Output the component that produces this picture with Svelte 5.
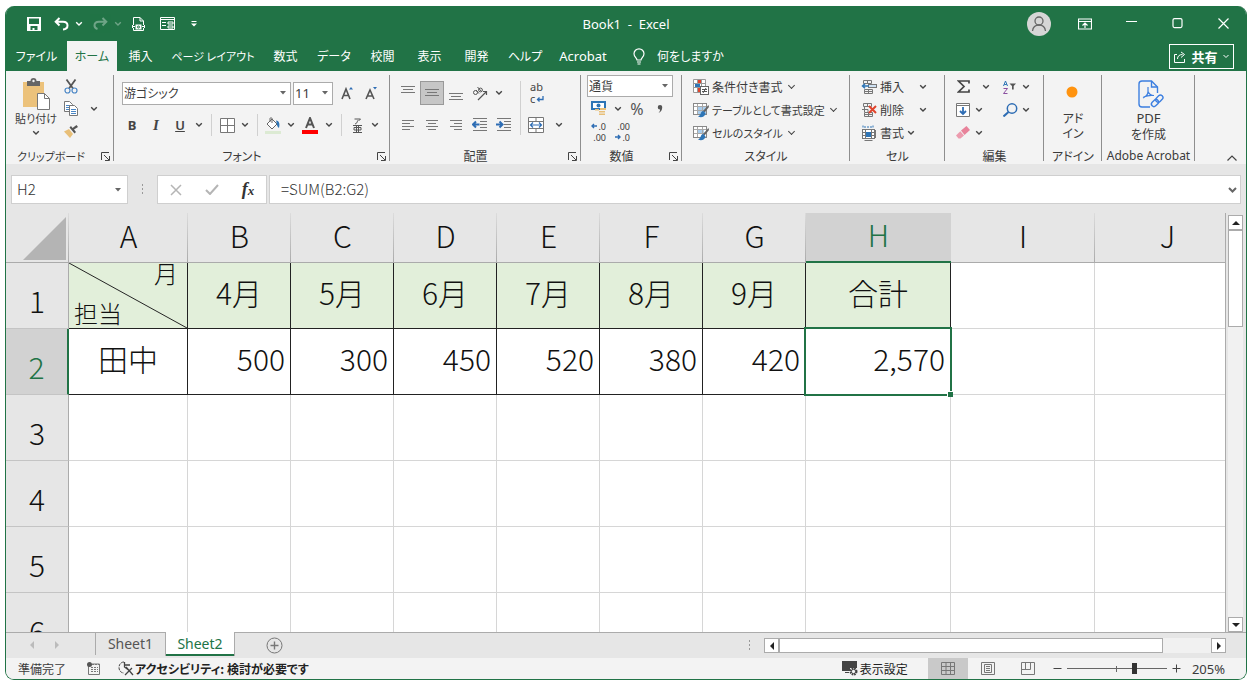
<script>
  const tabs = [
    { label: 'ファイル', size: 'file' },
    { label: 'ホーム', size: 'mid', active: true },
    { label: '挿入' },
    { label: 'ページ レイアウト', size: 'wide' },
    { label: '数式' },
    { label: 'データ', size: 'mid' },
    { label: '校閲' },
    { label: '表示' },
    { label: '開発' },
    { label: 'ヘルプ', size: 'mid' },
    { label: 'Acrobat', size: 'latin' }
  ];

  const months = ['4月', '5月', '6月', '7月', '8月', '9月'];
  const values = ['500', '300', '450', '520', '380', '420'];
  const columns = ['A', 'B', 'C', 'D', 'E', 'F', 'G', 'H', 'I', 'J'];
  const emptyRows = [3, 4, 5, 6];
  let formula = $state('=SUM(B2:G2)');
  let cellName = $state('H2');
</script>

{#snippet caret(kind = '')}
  <button class="caret {kind}" aria-label="その他">
    <svg width="8" height="6" viewBox="0 0 8 6"><path d="M1.2 1.3 4 4l2.8-2.7" fill="none" stroke="currentColor" stroke-width="1.4" /></svg>
  </button>
{/snippet}

{#snippet tri()}
  <svg class="tri" width="6" height="4" viewBox="0 0 6 4"><path d="M0 0h6L3 3.6z" fill="#666" /></svg>
{/snippet}

{#snippet groupLabel(text, launcher)}
  <div class="group-label">
    <span>{text}</span>
    {#if launcher}
      <button class="launcher" aria-label="{text}の設定">
        <svg width="9" height="9" viewBox="0 0 9 9"><path d="M.5 8V.5H8M3 3l5 5M8.500 4v4.500H4" fill="none" stroke="#444" /></svg>
      </button>
    {/if}
  </div>
{/snippet}

{#snippet lines(list)}
  <svg width="16" height="16" viewBox="0 0 16 16" stroke="#777">
    {#each list as [x1, x2, y]}<path d="M{x1} {y}.5H{x2}" />{/each}
  </svg>
{/snippet}

{#snippet indent(dir)}
  <svg width="16" height="14" viewBox="0 0 16 14" fill="none">
    <path d="M1 .5h14M8 3.500h7M8 6.500h7M8 9.500h7M1 12.500h14" stroke="#777" />
    {#if dir === 'left'}
      <path d="M7.500 6.500h-6M4 3.500l-3 3 3 3" stroke="#2e6db4" stroke-width="2" />
    {:else}
      <path d="M0 6.500h6M3.500 3.500l3 3-3 3" stroke="#2e6db4" stroke-width="2" />
    {/if}
  </svg>
{/snippet}

{#snippet brushTable(blue)}
  <svg width="16" height="16" viewBox="0 0 16 16" fill="none">
    <rect x=".5" y="1.500" width="13" height="11" fill="#fff" stroke="#888" />
    {#if blue}<rect x="4" y="5" width="7" height="4" fill="#a9cdec" />{:else}<rect x="5" y="5" width="8" height="7" fill="#a9cdec" />{/if}
    <path d="M1 4.500h12M1 8.500h12M4.500 2v10M9.500 2v10" stroke="#a8a8a8" />
    <path d="M15.500 3 10 9l1.500 1.500L16 5z" fill="#666" />
    <path d="M10.500 9c-2 0-2.500 1.500-3 3-.3 1-1.500 2-2.500 2.500 3 1.500 7 .5 7.500-3z" fill="#2e75b6" />
  </svg>
{/snippet}

{#snippet cellsIcon(kind)}
  <svg width="16" height="16" viewBox="0 0 16 16" fill="none">
    {#if kind === 'format'}
      <path d="M2 .5v3M12 .5v3M3 2h8" stroke="#2e75b6" stroke-dasharray="2 1" />
      <rect x="1.500" y="4.500" width="12" height="9" fill="#fff" stroke="#777" />
      <path d="M1 7.500h13M1 10.500h13M4.500 4v10M10.500 4v10M3.500 15.500h8M14.500 5v8" stroke="#777" />
      <rect x="5" y="7" width="5" height="5" fill="#2e75b6" />
    {:else}
      <path d="M2.500 1.500h8v3h-8zM6.500 1.500v3M3.500 10.500h8v4h-8zM3.500 12.500h8M7.500 10.500v4" stroke="#777" />
      {#if kind === 'insert'}
        <rect x="7.500" y="5.500" width="8" height="3" fill="#cfe2f3" stroke="#777" />
        <path d="M8 7H2M4 4.800 1.500 7 4 9.200" stroke="#2e75b6" stroke-width="1.500" />
      {:else}
        <path d="M1 7.500h6v3M3.500 5v5" stroke="#777" />
        <path d="m8 4 7 7m0-7-7 7" stroke="#e0442c" stroke-width="2" />
      {/if}
    {/if}
  </svg>
{/snippet}

<div class="window">
  <header class="title">
    <div class="quick">
      <button class="q" aria-label="上書き保存">
        <svg width="14" height="14" viewBox="0 0 14 14"><path fill="#fff" fill-rule="evenodd" d="M0 0h14v14H0zM2 1.500v5.500h10V1.500zM3.500 9v4h2v-2h2v2h3V9z" /></svg>
      </button>
      <button class="q" aria-label="元に戻す">
        <svg width="15" height="14" viewBox="0 0 15 14" fill="none" stroke="#fff" stroke-width="2"><path d="M5.500 1 1.700 4.800l3.800 3.700M2 4.800h7c3.500 0 4.500 2 4.500 3.700 0 2.500-2 3.800-4.500 4" /></svg>
      </button>
      {@render caret('light')}
      <button class="q dim" aria-label="やり直し">
        <svg width="15" height="14" viewBox="0 0 15 14" fill="none" stroke="#fff" stroke-width="2"><path d="m9.500 1 3.800 3.800-3.800 3.700M13 4.800H6c-3.500 0-4.500 2-4.500 3.700 0 2 1.500 3 3 3.500" /></svg>
      </button>
      {@render caret('light dim')}
      <button class="q" aria-label="PDF">
        <svg width="13" height="16" viewBox="0 0 13 16" fill="none" stroke="#fff"><path d="M1.500 9V1.500H8l3.500 3.500v4M8 1.500V5h3.500M1.500 12v2.500h10V12" /><path d="M0 10.500h3M10 10.500h3M.500 9v3M12.500 9v3" /><rect x="4" y="9" width="5" height="4" fill="#fff" /><circle cx="6.500" cy="11" r="1" stroke="#217346" /></svg>
      </button>
      <button class="q form" aria-label="フォーム">
        <svg width="15" height="13" viewBox="0 0 15 13" fill="none" stroke="#fff"><path d="M.500.500h14v12H.500zM.500 2.500h14M2 5.500h4M2 8.500h4M8 5h5v2H8zM8 9h5v2H8z" /></svg>
      </button>
      <button class="q" aria-label="ツールバーのカスタマイズ">
        <svg width="6" height="6" viewBox="0 0 6 6"><path d="M.500 0h5v1h-5zM0 2.500h6L3 5.500z" fill="#fff" /></svg>
      </button>
    </div>
    <h1>Book1&nbsp; -&nbsp; Excel</h1>
    <div class="controls">
      <button class="w" aria-label="アカウント">
        <svg width="24" height="24" viewBox="0 0 24 24" fill="none" stroke="#666" stroke-width="1.300"><circle cx="12" cy="12" r="12" fill="#d6d6d6" stroke="none" /><circle cx="12" cy="9" r="4" /><path d="M5.500 19c.5-4 3-6 6.500-6s6 2 6.500 6" /></svg>
      </button>
      <button class="w" aria-label="リボンの表示オプション">
        <svg width="14" height="12" viewBox="0 0 14 12" fill="none" stroke="#fff"><path d="M.500 1h13v10H.500zM0 3.500h14M7 10V5.500M4.500 7.500 7 5l2.500 2.500" stroke-width="1.200" /></svg>
      </button>
      <button class="w" aria-label="最小化"><svg width="11" height="11" viewBox="0 0 11 11"><path d="M0 3.500h11" stroke="#fff" /></svg></button>
      <button class="w" aria-label="最大化"><svg width="11" height="11" viewBox="0 0 11 11"><rect x="1" y="0.600" width="9" height="9" rx="1.500" fill="none" stroke="#fff" stroke-width="1.200" /></svg></button>
      <button class="w" aria-label="閉じる"><svg width="11" height="11" viewBox="0 0 11 11"><path d="m.500.500 10 10m0-10-10 10" stroke="#fff" stroke-width="1.200" /></svg></button>
    </div>
  </header>

  <nav class="tabs">
    {#each tabs as tab}
      <button class="tab {tab.size ?? ''}" class:active={tab.active}>{tab.label}</button>
    {/each}
    <button class="tell">
      <svg width="12" height="17" viewBox="0 0 12 17" fill="none" stroke="#fff" stroke-width="1.200"><path d="M4 12c0-2-3-3-3-6.200a5 5 0 0 1 10 0C11 9 8 10 8 12zM4 14h4M4.500 16h3" /></svg>
      何をしますか
    </button>
    <button class="share">
      <svg width="12" height="12" viewBox="0 0 12 12" fill="none" stroke="#fff"><path d="M3 3.500H.500v8h10V8M3.500 8c0-3 2-4.500 5-4.500M7 1l3.500 2.500L7 6.500" /></svg>
      <b>共有</b>
      <svg width="6" height="5" viewBox="0 0 6 5"><path d="m.500 1 2.500 2.500L5.500 1" fill="none" stroke="#fff" /></svg>
    </button>
  </nav>

  <section class="ribbon">
    <div class="group clipboard">
      <div class="body">
        <div class="paste">
          <button class="big small">
            <svg width="28" height="32" viewBox="0 0 28 32"><rect x="1" y="4" width="21" height="25" fill="#ecc27b" /><path d="M5 3h3.500a3 3 0 0 1 6 0H18v5H5z" fill="#666" /><circle cx="11.500" cy="3" r="1.200" fill="#f3f3f3" /><path d="M15.500 15.500h7l5 5v11h-12z" fill="#fff" stroke="#777" /><path d="M22.500 15.500v5h5" fill="none" stroke="#777" /></svg>
            貼り付け
          </button>
          {@render caret()}
        </div>
        <div class="stack">
          <button class="b" aria-label="切り取り">
            <svg width="14" height="15" viewBox="0 0 14 15" fill="none"><path d="m2.500.500 6.500 9M11.500.500 5 9.500" stroke="#555" stroke-width="1.800" /><circle cx="3.500" cy="11.500" r="2.500" stroke="#4a86c5" stroke-width="1.200" /><circle cx="10.500" cy="11.500" r="2.500" stroke="#4a86c5" stroke-width="1.200" /></svg>
          </button>
          <div class="row">
            <button class="b" aria-label="コピー">
              <svg width="14" height="15" viewBox="0 0 14 15" fill="#fff"><path d="M.500.500h5l3 3v7h-8z" stroke="#777" /><path d="M2 4.500h5M2 6.500h5M2 8.500h3" stroke="#4a86c5" /><path d="M5.500 4.500h5l3 3v7h-8z" stroke="#777" /><path d="M7 8.500h5M7 10.500h5M7 12.500h5" stroke="#4a86c5" /></svg>
            </button>
            {@render caret('wide')}
          </div>
          <button class="b" aria-label="書式のコピー">
            <svg width="14" height="13" viewBox="0 0 14 13"><path d="M0 6.500 5 4l4 5-3 4z" fill="#e8bf78" /><path d="m5.500 2.500 5 6 1.500-1.500-2-2.500L14 2l-1.500-2L8.500 3 7 1z" fill="#555" /></svg>
          </button>
        </div>
      </div>
      {@render groupLabel('クリップボード', true)}
    </div>

    <div class="group font">
      <div class="body two">
        <div class="row fields">
          <label class="combo fontname"><select aria-label="フォント"><option>游ゴシック</option></select>{@render tri()}</label>
          <label class="combo fontsize"><select aria-label="フォント サイズ"><option>11</option></select>{@render tri()}</label>
          <button class="b grow" aria-label="拡大"><svg width="14" height="16" viewBox="0 0 14 16"><path d="m1 14 4-10 4 10M2.500 10.500h5" fill="none" stroke="#555" stroke-width="1.600" /><path d="M8 4.500 10 2l2 2.500z" fill="#2e6db4" /></svg></button>
          <button class="b" aria-label="縮小"><svg width="14" height="16" viewBox="0 0 14 16"><path d="m1 14 4-9 4 9M2.500 11h5" fill="none" stroke="#555" stroke-width="1.600" /><path d="M8 2h4l-2 2.500z" fill="#2e6db4" /></svg></button>
        </div>
        <div class="row">
          <button class="b letter"><b>B</b></button>
          <button class="b letter serif"><i>I</i></button>
          <button class="b letter"><u>U</u></button>
          {@render caret()}
          <span class="sep"></span>
          <button class="b s" aria-label="罫線"><svg width="15" height="15" viewBox="0 0 15 15"><path d="M.500.500h14v14H.500zM7.500 0v15M0 7.500h15" fill="#fff" stroke="#777" /></svg></button>
          {@render caret()}
          <span class="sep"></span>
          <button class="b s" aria-label="塗りつぶし"><svg width="16" height="17" viewBox="0 0 16 17" fill="none"><path d="m2 7 5-5 5 5-5 5z" fill="#fff" stroke="#666" /><path d="M5 5V1.500c0-1 2-1 2 0V6" stroke="#666" /><path d="M11 3.500c3.500.5 4 3.500 3 7.500-2.500-1.500-2-4.500-3-7.500z" fill="#2e75b6" /><path d="M0 14h16v3H0z" fill="#dcead3" /></svg></button>
          {@render caret()}
          <button class="b" aria-label="文字の色"><svg width="16" height="17" viewBox="0 0 16 17"><path d="m4 11 4-10 4 10M5.500 7.500h5" fill="none" stroke="#555" stroke-width="2" /><path d="M0 13h16v4H0z" fill="#f00" /></svg></button>
          {@render caret()}
          <span class="sep"></span>
          <button class="b s" aria-label="ふりがな"><svg width="9" height="15" viewBox="0 0 9 15" fill="none" stroke="#555"><path d="M1.500 1h6L5.500 3M4.500 2.500c0 2-1 3-2.500 3.500M0 7.500h9M3.500 7.500v7M5.500 7.500v7M0 14.500h9M1 9.500h7v2.500H1z" /></svg></button>
          {@render caret()}
        </div>
      </div>
      {@render groupLabel('フォント', true)}
    </div>

    <div class="group align">
      <div class="body two split">
        <div class="block">
          <div class="row">
            <button class="b" aria-label="上揃え">{@render lines([[1, 15, 1], [3, 13, 4], [1, 15, 7]])}</button>
            <button class="b on" aria-label="上下中央揃え">{@render lines([[1, 15, 4], [3, 13, 7], [1, 15, 10]])}</button>
            <button class="b" aria-label="下揃え">{@render lines([[1, 15, 8], [3, 13, 11], [1, 15, 14]])}</button>
            <button class="b" aria-label="方向"><svg width="16" height="15" viewBox="0 0 16 15" fill="none" stroke="#555"><circle cx="3.500" cy="6.500" r="2" /><path d="m4 4 3 3.500M5.500 1l4 4.500" /><circle cx="8.500" cy="4" r="1.900" /><path d="m6 14 8.500-8.500M11 5.500h3.500V9" stroke-width="1.200" /></svg></button>
            {@render caret()}
          </div>
          <div class="row">
            <button class="b" aria-label="左揃え">{@render lines([[2, 14, 3], [2, 10, 6], [2, 14, 9], [2, 10, 12]])}</button>
            <button class="b" aria-label="中央揃え">{@render lines([[2, 14, 3], [4, 12, 6], [2, 14, 9], [4, 12, 12]])}</button>
            <button class="b" aria-label="右揃え">{@render lines([[2, 14, 3], [6, 14, 6], [2, 14, 9], [6, 14, 12]])}</button>
            <button class="b" aria-label="インデントを減らす">{@render indent('left')}</button>
            <button class="b" aria-label="インデントを増やす">{@render indent('right')}</button>
          </div>
        </div>
        <span class="sep tall"></span>
        <div class="block">
          <button class="b wrap" aria-label="折り返して全体を表示する">
            <span class="ab">ab</span>
            <span class="cr">c<svg width="8" height="7" viewBox="0 0 8 7" fill="none"><path d="M7 0v3.500H1.500M3.500 1.500l-2 2 2 2" stroke="#2e6db4" stroke-width="1.300" /></svg></span>
          </button>
          <div class="row">
            <button class="b" aria-label="セルを結合して中央揃え"><svg width="16" height="16" viewBox="0 0 16 16" fill="#fff"><path d="M.500.500h15v15H.500zM0 4.500h16M0 11.500h16M8 0v4M8 12v4" stroke="#777" /><path d="M2.500 8h11M5 5.500 2.500 8 5 10.500M11 5.500 13.500 8 11 10.500" fill="none" stroke="#2e6db4" stroke-width="1.200" /></svg></button>
            {@render caret('wide')}
          </div>
        </div>
      </div>
      {@render groupLabel('配置', true)}
    </div>

    <div class="group number">
      <div class="body">
        <label class="combo format"><select aria-label="表示形式"><option>通貨</option></select>{@render tri()}</label>
        <div class="row">
          <button class="b" aria-label="通貨表示形式"><svg width="16" height="15" viewBox="0 0 16 15"><rect x="1" y="1" width="13" height="7" fill="#fff" stroke="#2e75b6" stroke-width="2" /><circle cx="7.500" cy="4.500" r="2" fill="#2e75b6" /><path d="M9 7h6v2H9zM8 10h6v1.500H8zM8 12.500h6V14H8zM4 8h4v1.500H4z" fill="#e8bf78" /></svg></button>
          {@render caret()}
          <button class="b percent">%</button>
          <button class="b s comma" aria-label="桁区切り"><svg width="6" height="8" viewBox="0 0 6 8"><path d="M3 0a2.200 2.200 0 0 1 2.200 2.500C5.200 5 4 7 1.500 8c1-1.200 1.700-2.300 1.500-3.500A2.200 2.200 0 0 1 3 0z" fill="#555" /></svg></button>
        </div>
        <div class="row">
          <button class="b dec" aria-label="小数点以下の表示桁数を増やす">
            <span><svg width="6" height="6" viewBox="0 0 6 6" fill="none"><path d="M6 3H1M3 1 1 3l2 2" stroke="#2e6db4" stroke-width="1.400" /></svg>.0</span><span>.00</span>
          </button>
          <button class="b dec" aria-label="小数点以下の表示桁数を減らす">
            <span>.00</span><span><svg width="6" height="6" viewBox="0 0 6 6" fill="none"><path d="M0 3h5M3 1l2 2-2 2" stroke="#2e6db4" stroke-width="1.400" /></svg>.0</span>
          </button>
        </div>
      </div>
      {@render groupLabel('数値', true)}
    </div>

    <div class="group style">
      <div class="body">
        <button class="item">
          <svg width="16" height="16" viewBox="0 0 16 16"><path d="M.500.500h12v13H.500zM0 4.500h12M0 8.500h12M4.500 0v14M8.500 0v14" fill="#fff" stroke="#999" /><path d="M5 1h3v3H5zM5 9h2v4H5z" fill="#e0442c" /><path d="M2 5h5v3H2z" fill="#2e75b6" /><rect x="7.500" y="7.500" width="8" height="8" fill="#fff" stroke="#666" /><path d="M9 10.500h5M9 12.500h5M13 9l-3 5" stroke="#555" /></svg>
          条件付き書式<i class="chev"></i>
        </button>
        <button class="item small">{@render brushTable(false)}テーブルとして書式設定<i class="chev"></i></button>
        <button class="item small">{@render brushTable(true)}セルのスタイル<i class="chev"></i></button>
      </div>
      {@render groupLabel('スタイル')}
    </div>

    <div class="group cells">
      <div class="body">
        <div class="row"><button class="item">{@render cellsIcon('insert')}挿入</button>{@render caret('far')}</div>
        <div class="row"><button class="item">{@render cellsIcon('delete')}削除</button>{@render caret('far')}</div>
        <div class="row"><button class="item">{@render cellsIcon('format')}書式</button>{@render caret()}</div>
      </div>
      {@render groupLabel('セル')}
    </div>

    <div class="group edit">
      <div class="body">
        <div class="pair">
          <div class="row">
            <button class="b" aria-label="合計"><svg width="13" height="13" viewBox="0 0 13 13"><path d="M12 3.500V1H1.500l5.500 5.500L1.500 12H12V9.500" fill="none" stroke="#444" stroke-width="1.700" /></svg></button>
            {@render caret('wide')}
          </div>
          <div class="row">
            <button class="b" aria-label="並べ替えとフィルター"><svg width="14" height="14" viewBox="0 0 14 14" fill="none"><path d="m.500 6 2-5 2 5M1.200 4.500h2.600" stroke="#2e75b6" /><path d="M.500 8.500h4l-4 5h4" stroke="#8a4fa0" /><path d="M6.500 3.500H13L10.700 6v3.500H9V6z" fill="#555" /></svg></button>
            {@render caret()}
          </div>
        </div>
        <div class="pair">
          <div class="row">
            <button class="b" aria-label="フィル"><svg width="14" height="14" viewBox="0 0 14 14" fill="none"><path d="M.500.500h13v13H.500zM0 2.500h14" fill="#fff" stroke="#777" /><path d="M7 4v7M4 8l3 3 3-3" stroke="#2e6db4" stroke-width="1.800" /></svg></button>
            {@render caret()}
          </div>
          <div class="row">
            <button class="b" aria-label="検索と選択"><svg width="15" height="14" viewBox="0 0 15 14" fill="none" stroke="#2e6db4"><circle cx="9" cy="5.500" r="4.700" stroke-width="1.500" /><path d="m5.500 9-5 4.500" stroke-width="2" /></svg></button>
            {@render caret()}
          </div>
        </div>
        <div class="row">
          <button class="b" aria-label="クリア"><svg width="14" height="13" viewBox="0 0 14 13"><path d="M5 4.500 10.500 0 14 4 8.500 9z" fill="#e8829a" /><path d="M4.300 5.200 8 9.500 4.500 12.500H2.500L0 9.500z" fill="#ec9bae" /></svg></button>
          {@render caret()}
        </div>
      </div>
      {@render groupLabel('編集')}
    </div>

    <div class="group addin">
      <div class="body">
        <button class="big">
          <svg width="32" height="32" viewBox="0 0 32 32"><circle cx="15" cy="14" r="5.500" fill="#ff930f" /></svg>
          <span>アド<br />イン</span>
        </button>
      </div>
      {@render groupLabel('アドイン')}
    </div>

    <div class="group acrobat">
      <div class="body">
        <button class="big">
          <svg width="32" height="32" viewBox="0 0 32 32" fill="none" stroke="#3c7fe0" stroke-width="1.400"><path d="M18 29H10a3 3 0 0 1-3-3V6a3 3 0 0 1 3-3h9.500l6 6v6" /><path d="M19.500 3v6h6" /><path d="M16 9v4.500c0 2-2 5-5 6.500M16 13.500c1 2.500 3 4 6 4-4-.5-8 .5-10.500 1.500" stroke-width="1.200" /><rect x="19" y="22.500" width="8" height="5" rx="2.500" transform="rotate(-45 23 25)" /><rect x="23.500" y="18.500" width="8" height="5" rx="2.500" transform="rotate(-45 27 21)" /></svg>
          <span><span class="latin">PDF</span><br />を作成</span>
        </button>
      </div>
      {@render groupLabel('Adobe Acrobat')}
    </div>
    <button class="collapse" aria-label="リボンを折りたたむ"><svg width="10" height="6" viewBox="0 0 10 6"><path d="m.500 5.500 4.500-4.500 4.500 4.500" fill="none" stroke="#444" stroke-width="1.200" /></svg></button>
  </section>

  <section class="formula">
    <label class="box name"><input aria-label="名前ボックス" bind:value={cellName} />{@render tri()}</label>
    <span class="dots"></span>
    <div class="box fx">
      <button aria-label="キャンセル"><svg width="12" height="12" viewBox="0 0 12 12"><path d="m1 1 10 10m0-10L1 11" stroke="#b5b5b5" stroke-width="1.500" /></svg></button>
      <button aria-label="入力"><svg width="14" height="11" viewBox="0 0 14 11"><path d="m1 6 4 4 8-9" fill="none" stroke="#b5b5b5" stroke-width="2" /></svg></button>
      <button class="fn"><i>f<small>x</small></i></button>
    </div>
    <label class="box entry"><input aria-label="数式バー" bind:value={formula} />
      <svg width="9" height="6" viewBox="0 0 9 6"><path d="m1 1 3.500 3.500L8 1" fill="none" stroke="#666" stroke-width="2" /></svg>
    </label>
  </section>

  <main class="area">
    <div class="grid">
      <table>
        <colgroup>
          <col class="c-head" /><col class="c-a" />
          {#each months as _}<col class="c-month" />{/each}
          <col class="c-sum" /><col class="c-free" /><col />
        </colgroup>
        <thead>
          <tr>
            <th class="corner" aria-label="すべて選択"><svg width="43" height="43" viewBox="0 0 43 43"><path d="M43 0v43H0z" fill="#b4b4b4" /></svg></th>
            {#each columns as col}<th scope="col" class:sel={col === 'H'}>{col}</th>{/each}
          </tr>
        </thead>
        <tbody>
          <tr class="data">
            <th scope="row">1</th>
            <td class="green diagonal">
              <svg class="slash" viewBox="0 0 118 66" preserveAspectRatio="none"><path d="M0 0 118 66" stroke="#222" /></svg>
              <div class="split-text"><span>月</span><span>担当</span></div>
            </td>
            {#each months as m}<td class="green center">{m}</td>{/each}
            <td class="green center">合計</td>
            <td class="plain"></td><td class="plain"></td>
          </tr>
          <tr class="data">
            <th scope="row" class="sel">2</th>
            <td class="center">田中</td>
            {#each values as v}<td>{v}</td>{/each}
            <td class="current">2,570<span class="cursor"></span></td>
            <td class="plain"></td><td class="plain"></td>
          </tr>
          {#each emptyRows as r}
            <tr>
              <th scope="row">{r}</th>
              {#each columns as _}<td class="plain"></td>{/each}
            </tr>
          {/each}
        </tbody>
      </table>
    </div>
    <div class="vscroll">
      <button aria-label="上へ"><svg width="8" height="4" viewBox="0 0 8 4"><path d="M0 4h8L4 0z" fill="#222" /></svg></button>
      <div class="vthumb"></div>
      <button class="end" aria-label="下へ"><svg width="8" height="4" viewBox="0 0 8 4"><path d="M0 0h8L4 4z" fill="#222" /></svg></button>
    </div>
  </main>

  <section class="sheets">
    <button class="arrow" aria-label="前のシート"><svg width="4" height="8" viewBox="0 0 4 8"><path d="M4 0v8L0 4z" fill="#bbb" /></svg></button>
    <button class="arrow" aria-label="次のシート"><svg width="4" height="8" viewBox="0 0 4 8"><path d="M0 0v8l4-4z" fill="#bbb" /></svg></button>
    <button class="sheet first">Sheet1</button>
    <button class="sheet open">Sheet2</button>
    <button class="add" aria-label="新しいシート"><svg width="17" height="17" viewBox="0 0 17 17" fill="none" stroke="#777"><circle cx="8.500" cy="8.500" r="7.500" /><path d="M8.500 4.500v8M4.500 8.500h8" stroke-width="1.400" /></svg></button>
    <span class="dots"></span>
    <div class="hscroll">
      <button aria-label="左へ"><svg width="4" height="8" viewBox="0 0 4 8"><path d="M4 0v8L0 4z" fill="#222" /></svg></button>
      <div class="hthumb"></div>
      <button class="end" aria-label="右へ"><svg width="4" height="8" viewBox="0 0 4 8"><path d="M0 0v8l4-4z" fill="#222" /></svg></button>
    </div>
  </section>

  <footer class="status">
    <span>準備完了</span>
    <svg class="macro" width="13" height="13" viewBox="0 0 13 13" fill="none"><path d="M1.500 4v8.500h11V2H5" stroke="#777" /><path d="M5 2.500h7.500M4 5.500h7M4 7.500h7M4 9.500h7" stroke="#777" stroke-dasharray="2 1" /><circle cx="2.500" cy="2.500" r="2.500" fill="#555" /></svg>
    <button class="access">
      <svg width="16" height="15" viewBox="0 0 16 15" fill="none" stroke="#444"><path d="M6 1C3 1 1 3.500 1 6.500S3 12 6 12" stroke-dasharray="3 1" /><path d="M6 4h6M6.500 1v5l4 3M8 6l7 8M14 7l-7 7" stroke-width="1.300" /></svg>
      <b>アクセシビリティ: 検討が必要です</b>
    </button>
    <button class="display">
      <svg width="17" height="15" viewBox="0 0 17 15"><path d="M0 0h15v7H8v3H0zM3 11h4v1H3z" fill="#444" /><circle cx="11.500" cy="10.500" r="3" fill="#f3f3f3" stroke="#444" stroke-width="2" stroke-dasharray="1.600 .8" /><circle cx="11.500" cy="10.500" r="2.200" fill="none" stroke="#444" /></svg>
      表示設定
    </button>
    <button class="view picked" aria-label="標準"><svg width="14" height="13" viewBox="0 0 14 13"><path d="M.500.500h13v12H.500zM0 4.500h14M0 8.500h14M5 0v13M9.500 0v13" fill="none" stroke="#777" /></svg></button>
    <button class="view" aria-label="ページ レイアウト"><svg width="14" height="13" viewBox="0 0 14 13"><path d="M.500.500h13v12H.500zM3.500 2.500h7v8h-7zM5 4.500h4M5 6.500h4M5 8.500h4" fill="none" stroke="#777" /></svg></button>
    <button class="view" aria-label="改ページ プレビュー"><svg width="14" height="13" viewBox="0 0 14 13"><path d="M.500.500h13v12H.500zM4.500 0v7.500h5V0M0 7.500h5" fill="none" stroke="#777" /></svg></button>
    <button class="step" aria-label="縮小"><svg width="9" height="9" viewBox="0 0 9 9"><path d="M.500 4.500h8" stroke="#444" /></svg></button>
    <input class="zoom" type="range" min="10" max="400" value="278" aria-label="ズーム" />
    <button class="step" aria-label="拡大"><svg width="9" height="9" viewBox="0 0 9 9"><path d="M.500 4.500h8M4.500.500v8" stroke="#444" /></svg></button>
    <span class="percentage">205%</span>
  </footer>
</div>

<style>
  :global(body) { background: #fff; }
  .window {
    --green: #217346;
    box-sizing: border-box;
    height: calc(100vh - 12px);
    margin: 6px 6px 6px 5px;
    border: 1px solid var(--green);
    border-top: 0;
    border-radius: 9px;
    overflow: hidden;
    display: flex;
    flex-direction: column;
    background: #e6e6e6;
    color: #3b3b3b;
    font: 12px/16px "Noto Sans CJK JP", sans-serif;
    font-feature-settings: "palt";
  }
  .window :global(*) { box-sizing: border-box; }
  button {
    border: 0; padding: 0; margin: 0; background: none; color: inherit;
    font: inherit; font-feature-settings: inherit; white-space: nowrap;
    display: flex; align-items: center; justify-content: center; flex: none;
  }
  svg { display: block; flex: none; }
  select, input { font: inherit; color: inherit; border: 0; padding: 0; margin: 0; background: none; outline: 0; min-width: 0; appearance: none; }
  .latin { font-family: "Noto Sans", sans-serif; font-size: 13px; }
  .small { font-size: 11px; }

  .title { display: grid; grid-template-columns: 1fr auto 1fr; align-items: center; height: 35px; flex: none; background: var(--green); color: #fff; }
  .title h1 { margin: 0; font: 13px/16px "Noto Sans", sans-serif; }
  .quick { display: flex; align-items: center; padding-left: 16px; }
  .q { width: 24px; height: 24px; margin-right: 3px; }
  .quick .q:nth-child(2), .quick .q:nth-child(4) { margin-right: 0; }
  .quick .q:nth-child(4) { margin-left: 3px; }
  .quick .q:nth-child(6) { margin-left: 2px; }
  .quick .form { margin-left: 2px; }
  .dim { opacity: .35; }
  .caret { width: 14px; height: 20px; color: #444; }
  .caret.light { color: #fff; width: 12px; }
  .caret.wide { width: 22px; }
  .controls { display: flex; justify-content: flex-end; }
  .w { width: 46px; height: 34px; }

  .tabs { display: flex; height: 30px; flex: none; background: var(--green); color: #fff; }
  .tab { width: 47px; }
  .tab.file { width: 61px; }
  .tab.mid { width: 50px; }
  .tab.wide { width: 98px; font-size: 11px; }
  .tab.latin { width: 66px; }
  .tab.active { background: #f3f3f3; color: var(--green); }
  .tell { gap: 12px; margin-left: 17px; }
  .share { gap: 5px; width: 65px; height: 25px; margin: 3px 12px 0 auto; border: 1px solid #fff; font-size: 13px; }

  .ribbon { display: flex; height: 93px; flex: none; background: #f3f3f3; padding-top: 4px; }
  .group { display: flex; flex-direction: column; flex: none; position: relative; }
  .group::after { content: ""; position: absolute; right: 0; top: 0; bottom: 3px; width: 1px; background: #8e8e8e; }
  .group .body { height: 72px; padding-left: 6px; }
  .group-label { height: 17px; display: flex; justify-content: center; align-items: center; position: relative; white-space: nowrap; }
  .launcher { position: absolute; right: 4px; top: 5px; }
  .row { display: flex; align-items: center; height: 23px; }
  .two { padding-top: 6px; display: flex; flex-direction: column; gap: 8px; }
  .two .row, .two .wrap { height: 24px; }
  .b { width: 24px; height: 22px; }
  .b.s { width: 22px; }
  .b.on { background: #c6c6c6; border: 1px solid #999; height: 24px; }
  .sep { width: 10px; height: 22px; background: linear-gradient(#d0d0d0, #d0d0d0) center / 1px 100% no-repeat; }
  .sep.tall { width: 8px; height: 54px; }
  .letter { font: 13px/16px "Noto Sans", sans-serif; color: #444; }
  .letter u { font-weight: 600; }
  .serif { font: bold 15px/16px "Liberation Serif", serif; }

  .clipboard { width: 108px; }
  .clipboard .body { display: flex; }
  .paste { width: 48px; display: flex; flex-direction: column; align-items: center; }
  .paste .caret { height: 14px; }
  .stack { margin-left: -1px; }
  .clipboard .group-label { padding-right: 18px; font-size: 11px; }
  .big { flex-direction: column; padding-top: 3px; }
  .big > span { line-height: 15px; text-align: center; }
  .font { width: 276px; }
  .font .group-label { padding-right: 20px; }
  .font .fields { padding-left: 2px; gap: 2px; }
  .fields .b { width: 22px; }
  .fields .grow { margin-left: 2px; }
  .combo { display: flex; align-items: center; height: 23px; border: 1px solid #ababab; background: #fff; padding: 0 4px 0 1px; }
  .combo select { flex: 1; height: 21px; font-feature-settings: "palt"; }
  .fontname { width: 169px; }
  .fontsize { width: 40px; font: 13px/16px "Noto Sans", sans-serif; }
  .align { width: 191px; }
  .two.split { flex-direction: row; gap: 0; }
  .block { display: flex; flex-direction: column; gap: 8px; }
  .block:first-child { width: 120px; }
  .align .group-label { padding-right: 20px; }
  .wrap { flex-direction: column; align-items: flex-start; padding-left: 6px; font: 11px/12px "Noto Sans", sans-serif; color: #444; }
  .cr { display: flex; align-items: center; gap: 1px; }
  .number { width: 101px; }
  .number .group-label { padding-right: 20px; }
  .format { width: 86px; height: 22px; }
  .percent { font: 16px/16px "Noto Sans", sans-serif; color: #555; }
  .dec { flex-direction: column; align-items: flex-end; padding-right: 5px; font: 9px/11px "Noto Sans", sans-serif; }
  .dec span { display: flex; align-items: center; gap: 1px; }
  .style { width: 168px; }
  .style .body { padding-left: 11px; }
  .item { height: 23px; gap: 3px; }
  .chev { width: 5px; height: 5px; border: solid #444; border-width: 0 1px 1px 0; transform: rotate(45deg); margin: -3px 0 0 3px; }
  .cells { width: 95px; }
  .cells .body { padding-left: 11px; }
  .cells .far { margin-left: 12px; }
  .edit { width: 99px; }
  .edit .body { padding-left: 8px; }
  .edit .b { width: 20px; }
  .edit .caret { width: 12px; }
  .edit .caret.wide { width: 26px; }
  .pair { display: grid; grid-template-columns: 47px auto; }
  .addin { width: 58px; }
  .acrobat { width: 93px; }
  .addin .body, .acrobat .body { padding: 0; display: flex; justify-content: center; align-items: flex-start; }
  .acrobat .group-label { font: 12px/16px "Noto Sans", sans-serif; }
  .collapse { margin: auto 9px 3px auto; }

  .formula { display: flex; align-items: flex-start; height: 49px; flex: none; padding: 11px 5px 0; font: 15px/20px "Noto Sans CJK JP", sans-serif; font-weight: 300; color: #333; }
  .box { display: flex; align-items: center; height: 29px; background: #fff; border: 1px solid #cfcfcf; }
  .name { width: 117px; padding: 0 6px 0 5px; }
  .name input, .entry input { flex: 1; width: 0; height: 24px; margin-bottom: 2px; }
  .dots { flex: none; width: 3px; height: 12px; margin: 8px 13px 0; background: radial-gradient(circle, #999 1px, transparent 1px) 0 0 / 3px 4px; }
  .fx { width: 110px; }
  .fx button { flex: 1; }
  .fn { font: bold 18px/20px "Liberation Serif", serif; }
  .fn small { font-size: 13px; }
  .entry { flex: 1; margin-left: 2px; padding: 0 3px 0 11px; }

  .area { flex: 1; min-height: 0; display: flex; }
  .grid { flex: 1; min-width: 0; overflow: hidden; border-right: 1px solid #ababab; background: #fff; }
  table { width: 100%; min-width: 1234px; table-layout: fixed; border-spacing: 0; font: 300 30px/40px "Noto Sans CJK JP", sans-serif; color: #111; font-feature-settings: normal; }
  .c-head { width: 63px; }
  .c-a { width: 119px; }
  .c-month { width: 103px; }
  .c-sum { width: 145px; }
  .c-free { width: 144px; }
  th, td { padding: 0; height: 66px; border: solid #222; border-width: 0 1px 1px 0; position: relative; }
  th { font-weight: 300; background: #e6e6e6; border-color: #ababab; }
  thead th { height: 50px; padding-bottom: 6px; border-right: 0; background: linear-gradient(#dcdcdc, #ababab) right / 1px 100% no-repeat #e6e6e6; }
  thead th.corner { padding: 0 3px 2px 0; vertical-align: bottom; }
  .corner svg { margin-left: auto; }
  tbody th { border-bottom-color: #c4c4c4; padding-top: 9px; }
  thead th.sel { background: #d2d2d2; color: var(--green); border-bottom: 2px solid var(--green); }
  tbody th.sel { background: #d2d2d2; color: var(--green); border-right: 2px solid var(--green); }
  td { text-align: right; padding: 0 5px 7px 0; }
  td.plain { border-color: #d6d6d6; }
  .green { background: #e2efda; }
  td.center { text-align: center; padding-right: 0; }
  td.diagonal { padding: 0; }
  td.current { z-index: 1; }
  .slash { position: absolute; inset: 0; width: 100%; height: 100%; }
  .split-text { height: 65px; display: flex; flex-direction: column; justify-content: space-between; font-size: 24px; line-height: 20px; padding: 0 9px 5px 5px; }
  .split-text span:last-child { text-align: left; }
  .cursor { position: absolute; inset: -2px; border: 2px solid var(--green); }
  .cursor::after { content: ""; position: absolute; right: -3px; bottom: -3px; width: 5px; height: 5px; background: var(--green); border: solid #fff; border-width: 1px 0 0 1px; }
  .vscroll { width: 15px; margin: 2px 3px 0 2px; display: flex; flex-direction: column; background: #f1f1f1; }
  .vscroll button, .hscroll button { width: 15px; height: 15px; background: #fff; border: 1px solid #ababab; }
  .vthumb { height: 97px; background: #fff; border: 1px solid #ababab; }
  .vscroll .end { margin-top: auto; }

  .sheets { display: flex; height: 26px; flex: none; border-top: 1px solid #ababab; font: 14px/20px "Noto Sans", sans-serif; color: #555; }
  .arrow { width: 25px; height: 24px; }
  .arrow:first-child { margin-left: 13px; }
  .sheet { width: 70px; height: 22px; }
  .sheet.first { margin-left: 26px; border-left: 1px solid #ababab; }
  .sheet.open { margin-top: -1px; height: 24px; background: #fff; color: var(--green); border: solid #ababab; border-width: 0 1px; box-shadow: inset 0 -2px var(--green); }
  .add { width: 78px; height: 25px; }
  .sheets .dots { margin: 6px 13px 0 auto; }
  .hscroll { display: flex; flex: 0 1 462px; height: 15px; margin: 5px 20px 0 0; background: #f1f1f1; }
  .hthumb { flex: 0 1 384px; background: #fff; border: 1px solid #ababab; }
  .hscroll .end { margin-left: auto; }

  .status { display: flex; align-items: center; height: 21px; flex: none; background: #f3f3f3; padding-left: 12px; }
  .macro { margin: 0 18px 0 21px; }
  .access { gap: 1px; color: #222; }
  .display { gap: 1px; margin: 0 20px 0 auto; color: #222; }
  .view { width: 40px; height: 21px; }
  .picked { background: #c9c9c9; }
  .step { width: 15px; height: 20px; margin-left: 2px; }
  .zoom { width: 100px; height: 14px; margin-left: 2px; background: linear-gradient(#666, #666) center / 100% 1px no-repeat, linear-gradient(#666, #666) center / 1px 6px no-repeat; }
  .zoom::-webkit-slider-thumb { appearance: none; width: 5px; height: 11px; background: #333; }
  .percentage { font: 13px/16px "Noto Sans", sans-serif; margin: 0 21px 0 8px; }
</style>
